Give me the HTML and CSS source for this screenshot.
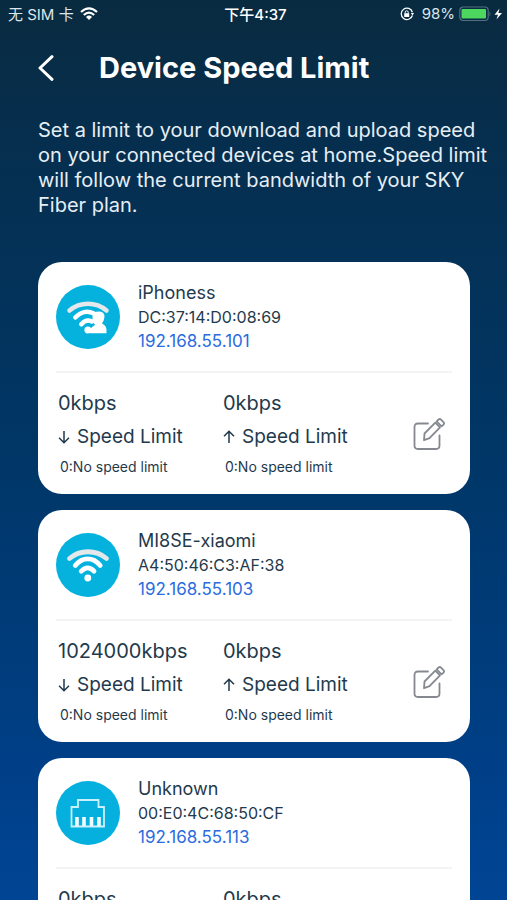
FILE: index.html
```html
<!DOCTYPE html>
<html lang="en">
<head>
<meta charset="utf-8">
<meta name="viewport" content="width=device-width, initial-scale=1">
<title>Device Speed Limit</title>
<link rel="stylesheet" href="styles.css">
</head>
<body>
<svg class="defs" width="0" height="0" aria-hidden="true">
  <symbol id="edit" viewBox="0 0 34 34">
    <g fill="none" stroke="#85898f" stroke-width="1.8" stroke-linejoin="round" stroke-linecap="round">
      <path d="M16 6.500H6Q2.500 6.500 2.500 10V28.500Q2.500 32 6 32H24Q27.500 32 27.500 28.500V18.500"/>
      <path d="M12.500 16.500 23.300 5.700 28 10.400 17.500 21.200 12 23.200Z"/>
      <path d="M24.600 4.400 26.600 2.500Q27.800 1.500 29 2.600L31.700 5.400Q32.700 6.600 31.600 7.600L29.600 9.400Z"/>
    </g>
  </symbol>
  <symbol id="arrow-down" viewBox="0 0 12 14"><path d="M6 1V12.500M1 7.700 6 12.700 11 7.700" fill="none" stroke="currentColor" stroke-width="1.500"/></symbol>
  <symbol id="arrow-up" viewBox="0 0 12 14"><path d="M6 13V1.500M1 6.300 6 1.300 11 6.300" fill="none" stroke="currentColor" stroke-width="1.500"/></symbol>
  <symbol id="wifi" viewBox="0 0 64 64">
    <circle cx="32" cy="32" r="32" fill="#05b2de"/>
    <g fill="none" stroke="#fff" stroke-width="4.800" stroke-linecap="round">
      <path d="M13.500 25.500C24 16.500 40 16.500 50.500 25.500" stroke="#e4e8ea"/>
      <path d="M19.300 32.500C26.500 23.700 37 23.700 44.200 32.500"/>
      <path d="M25.300 38.200Q31.800 31.500 38 38.200"/>
    </g>
    <circle cx="31.800" cy="45" r="3.400" fill="#fff"/>
  </symbol>
  <symbol id="wifi-user" viewBox="0 0 64 64">
    <circle cx="32" cy="32" r="32" fill="#05b2de"/>
    <g fill="none" stroke="#fff" stroke-width="4.500" stroke-linecap="round">
      <path d="M13.500 25.500C24 16.500 40 16.500 50.500 25.500" stroke="#e4e8ea"/>
      <path d="M19.300 32.500Q28 23.500 38 28.500"/>
      <path d="M25.300 39.200Q30 33.500 36 36.500"/>
    </g>
    <circle cx="31.800" cy="45" r="3.400" fill="#fff"/>
    <path d="M36.500 29.500Q38 26.500 42.500 26.500Q48.500 26.500 48.500 31.500Q48.500 35 46 38.500Q50.500 40.500 50.500 45V48.300H34V44Q36.500 41.500 39 40L36.500 36Z" fill="#fff"/>
  </symbol>
  <symbol id="ethernet" viewBox="0 0 64 64">
    <circle cx="32" cy="32" r="32" fill="#05b0de"/>
    <path d="M15.500 45.500V26H22V19H42.500V26H48V45.500Z" fill="none" stroke="#c9f1fb" stroke-width="1.800"/>
    <path d="M21 36V45M28 36V45M35.500 36V45M43 36V45" stroke="#f2fcff" stroke-width="3.600"/>
  </symbol>
</svg>

<div class="status">
  <div class="status-left">
    <span>无 SIM 卡</span>
    <svg width="18" height="13" viewBox="0 0 18 13" fill="none" stroke="#fff" stroke-width="2.200" aria-hidden="true">
      <path d="M1 5Q9-2.400 17 5"/><path d="M3.800 8Q9 3.300 14.200 8"/><path d="M6 10Q9 7.200 12 10L9 13Z" fill="#fff" stroke="none"/>
    </svg>
  </div>
  <div class="status-time">下午4:37</div>
  <div class="status-right">
    <svg width="14" height="14" viewBox="0 0 14 14" fill="none" stroke="#fff" stroke-width="1.300" aria-hidden="true">
      <path d="M12.400 8.500A5.700 5.700 0 1 1 12.400 5.200"/><path d="M10.800 6H14L12.600 8.500Z" fill="#fff" stroke="none"/>
      <rect x="4.200" y="6.200" width="5" height="3.800" fill="#fff" stroke="none"/><path d="M5.200 6.500V5.200Q5.200 3.800 6.700 3.800T8.200 5.200V6.500" stroke-width="1"/>
    </svg>
    <span>98%</span>
    <svg class="battery" width="44" height="16" viewBox="0 0 44 16" aria-hidden="true">
      <rect x="0.800" y="1" width="28.400" height="13.500" rx="3.500" fill="none" stroke="#52717f" stroke-width="1.200"/>
      <rect x="2.500" y="3" width="24.500" height="9.500" rx="1" fill="#4cd85f"/>
      <path d="M30.500 5.500Q32.500 8 30.500 10.500Z" fill="#52717f"/>
      <path d="M40.500 2.500 35.500 8.800H39L37.500 13.500 43 6.900H39.400Z" fill="#fff"/>
    </svg>
  </div>
</div>

<header class="header">
  <button class="back" type="button" aria-label="Back">
    <svg width="16" height="26" viewBox="0 0 16 26" fill="none" stroke="#fff" stroke-width="3" stroke-linecap="round" stroke-linejoin="round" aria-hidden="true"><path d="M14 1.700 2 13 14 24.300"/></svg>
  </button>
  <h1>Device Speed Limit</h1>
</header>

<p class="intro">Set a limit to your download and upload speed on your connected devices at home.Speed limit will follow the current bandwidth of your SKY Fiber plan.</p>

<main class="devices">
  <article class="card">
    <div class="device">
      <svg class="avatar" aria-hidden="true"><use href="#wifi-user"/></svg>
      <div>
        <h2>iPhoness</h2>
        <div class="mac">DC:37:14:D0:08:69</div>
        <div class="ip">192.168.55.101</div>
      </div>
    </div>
    <div class="limits">
      <div class="limit">
        <div class="rate">0kbps</div>
        <div class="label"><svg class="arrow" aria-hidden="true"><use href="#arrow-down"/></svg>Speed Limit</div>
        <div class="note">0:No speed limit</div>
      </div>
      <div class="limit">
        <div class="rate">0kbps</div>
        <div class="label"><svg class="arrow" aria-hidden="true"><use href="#arrow-up"/></svg>Speed Limit</div>
        <div class="note">0:No speed limit</div>
      </div>
      <button class="edit" type="button" aria-label="Edit"><svg aria-hidden="true"><use href="#edit"/></svg></button>
    </div>
  </article>

  <article class="card">
    <div class="device">
      <svg class="avatar" aria-hidden="true"><use href="#wifi"/></svg>
      <div>
        <h2>MI8SE-xiaomi</h2>
        <div class="mac">A4:50:46:C3:AF:38</div>
        <div class="ip">192.168.55.103</div>
      </div>
    </div>
    <div class="limits">
      <div class="limit">
        <div class="rate">1024000kbps</div>
        <div class="label"><svg class="arrow" aria-hidden="true"><use href="#arrow-down"/></svg>Speed Limit</div>
        <div class="note">0:No speed limit</div>
      </div>
      <div class="limit">
        <div class="rate">0kbps</div>
        <div class="label"><svg class="arrow" aria-hidden="true"><use href="#arrow-up"/></svg>Speed Limit</div>
        <div class="note">0:No speed limit</div>
      </div>
      <button class="edit" type="button" aria-label="Edit"><svg aria-hidden="true"><use href="#edit"/></svg></button>
    </div>
  </article>

  <article class="card">
    <div class="device">
      <svg class="avatar" aria-hidden="true"><use href="#ethernet"/></svg>
      <div>
        <h2>Unknown</h2>
        <div class="mac">00:E0:4C:68:50:CF</div>
        <div class="ip">192.168.55.113</div>
      </div>
    </div>
    <div class="limits">
      <div class="limit">
        <div class="rate">0kbps</div>
      </div>
      <div class="limit">
        <div class="rate">0kbps</div>
      </div>
    </div>
  </article>
</main>
</body>
</html>
```
FILE: styles.css
```css
* {
  box-sizing: border-box;
}

body {
  display: flex;
  flex-direction: column;
  height: 100vh;
  margin: 0;
  overflow: hidden;
  background: linear-gradient(#092b40 0%, #062e4d 14%, #003768 52%, #00408a 88%, #004594 100%);
  color: #1f3a4d;
  font-family: Inter, "Noto Sans CJK SC", sans-serif;
}

h1,
h2,
p {
  margin: 0;
  font-weight: 400;
}

button {
  padding: 0;
  border: 0;
  background: none;
  cursor: pointer;
}

svg {
  display: block;
  flex: none;
}

.defs {
  position: absolute;
}

.status {
  display: grid;
  grid-template-columns: 1fr auto 1fr;
  align-items: center;
  height: 27px;
  padding: 0 4px 0 8px;
  color: #fff;
  font-size: 15px;
}

.status-left,
.status-right {
  display: flex;
  align-items: center;
  gap: 8px;
  color: #dde6ec;
}

.status-left {
  gap: 6px;
}

.status-right {
  justify-content: flex-end;
}

.battery {
  margin-left: -4px;
}

.status-time {
  font-weight: 500;
}

.header {
  display: flex;
  align-items: center;
  gap: 45px;
  height: 81px;
  padding: 0 38px;
  color: #fff;
}

h1 {
  font-size: 29px;
  font-weight: 700;
}

.intro {
  flex: none;
  padding: 10px 16px 0 38px;
  color: #e6eef5;
  font-size: 20px;
  line-height: 25px;
}

.devices {
  display: flex;
  flex: 1;
  flex-direction: column;
  gap: 16px;
  min-height: 0;
  margin-top: 44px;
  padding: 0 37px 0 38px;
  overflow-y: auto;
  scrollbar-width: none;
}

.card {
  flex: none;
  min-height: 232px;
  padding: 0 18px;
  border-radius: 24px;
  background: #fff;
}

.device {
  display: flex;
  align-items: center;
  gap: 18px;
  height: 111px;
  border-bottom: 2px solid #f3f4f4;
}

.avatar {
  width: 64px;
  height: 64px;
}

.device h2 {
  font-size: 18px;
  line-height: 25px;
}

.mac {
  font-size: 16px;
  line-height: 24px;
}

.ip {
  color: #2a6be0;
  font-size: 17px;
  line-height: 25px;
}

.limits {
  display: grid;
  grid-template-columns: 165px 1fr auto;
  align-items: center;
  padding: 13px 6px 0 2px;
}

.rate {
  font-size: 20px;
  line-height: 34px;
}

.label {
  display: flex;
  align-items: center;
  gap: 7px;
  font-size: 19px;
  line-height: 33px;
}

.arrow {
  width: 12px;
  height: 14px;
}

.note {
  padding-left: 2px;
  font-size: 14px;
  line-height: 28px;
}

.edit svg {
  width: 34px;
  height: 34px;
}
```
